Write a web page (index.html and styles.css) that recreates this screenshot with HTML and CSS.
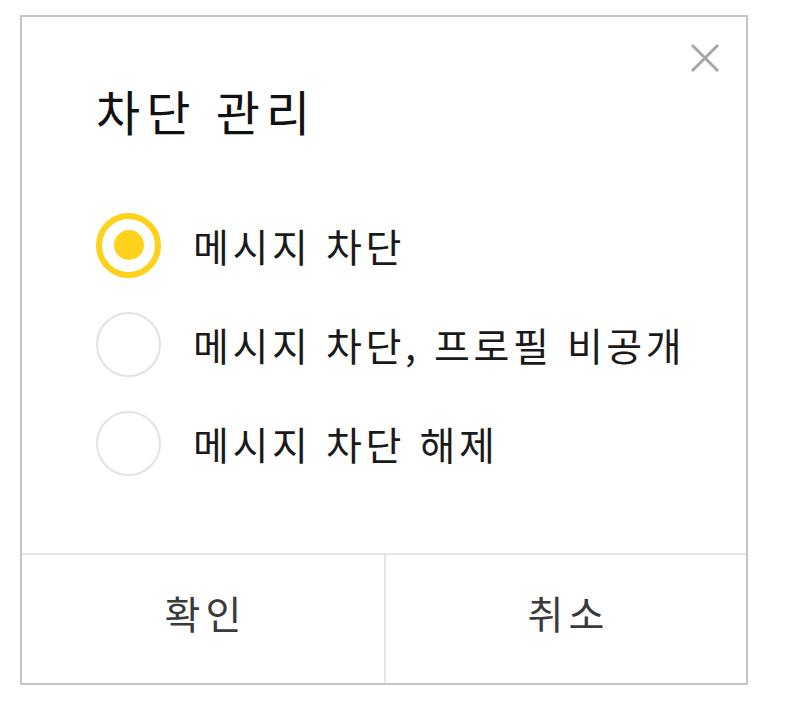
FILE: index.html
```html
<!DOCTYPE html>
<html lang="ko">
<head>
<meta charset="utf-8">
<title>차단 관리</title>
<link rel="stylesheet" href="styles.css">
</head>
<body>
<div class="dialog">
  <button class="close" aria-label="닫기">
    <svg viewBox="0 0 30 30" width="30" height="30"><path d="M2 2 L28 28 M28 2 L2 28" stroke="#a6a6a6" stroke-width="3" fill="none"/></svg>
  </button>
  <div class="body">
    <h1 class="title">차단 관리</h1>
    <ul class="options">
      <li class="option selected"><span class="radio"></span><span class="label">메시지 차단</span></li>
      <li class="option"><span class="radio"></span><span class="label">메시지 차단, 프로필 비공개</span></li>
      <li class="option"><span class="radio"></span><span class="label">메시지 차단 해제</span></li>
    </ul>
  </div>
  <div class="footer">
    <button class="btn">확인</button>
    <button class="btn">취소</button>
  </div>
</div>
</body>
</html>
```
FILE: styles.css
```css
* { box-sizing: border-box; }
html, body { margin: 0; padding: 0; background: #fff; }
body {
  font-family: "Noto Sans CJK KR", "Noto Sans", sans-serif;
  color: #1a1a1a;
}
.dialog {
  position: relative;
  margin: 15px 0 0 20px;
  width: 728px;
  height: 670px;
  border: 2px solid #c4c4c4;
  display: flex;
  flex-direction: column;
  background: #fff;
}
.close {
  position: absolute;
  top: 26px;
  right: 26px;
  width: 30px;
  height: 30px;
  padding: 0;
  border: 0;
  background: none;
  display: flex;
}
.body {
  flex: 1;
  padding: 64px 0 0 74px;
}
.title {
  margin: 0;
  font-size: 48px;
  line-height: 58px;
  letter-spacing: 6px;
  font-weight: 400;
  color: #111;
}
.options {
  list-style: none;
  margin: 73px 0 0;
  padding: 0;
  display: flex;
  flex-direction: column;
  gap: 33px;
}
.option {
  display: flex;
  align-items: center;
  height: 66px;
  gap: 32px;
}
.radio {
  width: 65px;
  height: 65px;
  border-radius: 50%;
  border: 2px solid #e2e2e2;
  flex: none;
  display: flex;
  align-items: center;
  justify-content: center;
}
.option.selected .radio {
  border: 6px solid #fcd21c;
}
.option.selected .radio::after {
  content: "";
  width: 30px;
  height: 30px;
  border-radius: 50%;
  background: #fcd21c;
}
.label {
  font-size: 39px;
  line-height: 46px;
  letter-spacing: 3.6px;
  color: #1a1a1a;
}
.footer {
  height: 130px;
  border-top: 2px solid #e6e6e6;
  display: grid;
  grid-template-columns: 1fr 1fr;
}
.btn {
  border: 0;
  background: none;
  padding: 0 0 14px 5px;
  font-family: inherit;
  font-size: 39px;
  letter-spacing: 5px;
  color: #3a3a3a;
}
.btn + .btn {
  border-left: 2px solid #e6e6e6;
}
```
